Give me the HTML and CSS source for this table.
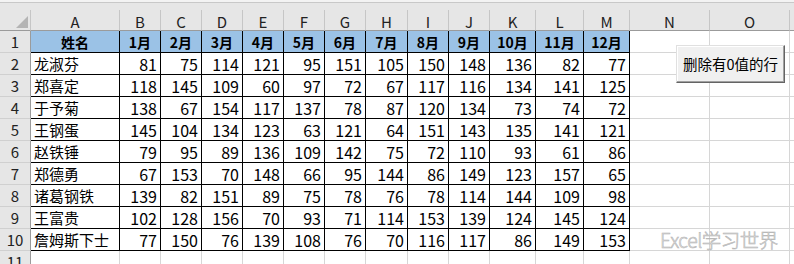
FILE: index.html
```html
<!DOCTYPE html>
<html lang="zh">
<head>
<meta charset="utf-8">
<link rel="stylesheet" href="styles.css">
</head>
<body>
<div class="top"></div>
<div class="sheet">
  <div class="ch corner"><span class="tri"></span></div>
  <div class="ch">A</div><div class="ch">B</div><div class="ch">C</div><div class="ch">D</div><div class="ch">E</div><div class="ch">F</div><div class="ch">G</div><div class="ch">H</div><div class="ch">I</div><div class="ch">J</div><div class="ch">K</div><div class="ch">L</div><div class="ch">M</div><div class="ch">N</div><div class="ch">O</div><div class="ch e"></div>

  <div class="rh">1</div>
  <div class="c hd">姓名</div><div class="c hd">1月</div><div class="c hd">2月</div><div class="c hd">3月</div><div class="c hd">4月</div><div class="c hd">5月</div><div class="c hd">6月</div><div class="c hd">7月</div><div class="c hd">8月</div><div class="c hd">9月</div><div class="c hd">10月</div><div class="c hd">11月</div><div class="c hd">12月</div><div></div><div></div><div class="e"></div>

  <div class="rh">2</div>
  <div class="c nm">龙淑芬</div><div class="c num">81</div><div class="c num">75</div><div class="c num">114</div><div class="c num">121</div><div class="c num">95</div><div class="c num">151</div><div class="c num">105</div><div class="c num">150</div><div class="c num">148</div><div class="c num">136</div><div class="c num">82</div><div class="c num">77</div><div></div><div></div><div class="e"></div>

  <div class="rh">3</div>
  <div class="c nm">郑喜定</div><div class="c num">118</div><div class="c num">145</div><div class="c num">109</div><div class="c num">60</div><div class="c num">97</div><div class="c num">72</div><div class="c num">67</div><div class="c num">117</div><div class="c num">116</div><div class="c num">134</div><div class="c num">141</div><div class="c num">125</div><div></div><div></div><div class="e"></div>

  <div class="rh">4</div>
  <div class="c nm">于予菊</div><div class="c num">138</div><div class="c num">67</div><div class="c num">154</div><div class="c num">117</div><div class="c num">137</div><div class="c num">78</div><div class="c num">87</div><div class="c num">120</div><div class="c num">134</div><div class="c num">73</div><div class="c num">74</div><div class="c num">72</div><div></div><div></div><div class="e"></div>

  <div class="rh">5</div>
  <div class="c nm">王钢蛋</div><div class="c num">145</div><div class="c num">104</div><div class="c num">134</div><div class="c num">123</div><div class="c num">63</div><div class="c num">121</div><div class="c num">64</div><div class="c num">151</div><div class="c num">143</div><div class="c num">135</div><div class="c num">141</div><div class="c num">121</div><div></div><div></div><div class="e"></div>

  <div class="rh">6</div>
  <div class="c nm">赵铁锤</div><div class="c num">79</div><div class="c num">95</div><div class="c num">89</div><div class="c num">136</div><div class="c num">109</div><div class="c num">142</div><div class="c num">75</div><div class="c num">72</div><div class="c num">110</div><div class="c num">93</div><div class="c num">61</div><div class="c num">86</div><div></div><div></div><div class="e"></div>

  <div class="rh">7</div>
  <div class="c nm">郑德勇</div><div class="c num">67</div><div class="c num">153</div><div class="c num">70</div><div class="c num">148</div><div class="c num">66</div><div class="c num">95</div><div class="c num">144</div><div class="c num">86</div><div class="c num">149</div><div class="c num">123</div><div class="c num">157</div><div class="c num">65</div><div></div><div></div><div class="e"></div>

  <div class="rh">8</div>
  <div class="c nm">诸葛钢铁</div><div class="c num">139</div><div class="c num">82</div><div class="c num">151</div><div class="c num">89</div><div class="c num">75</div><div class="c num">78</div><div class="c num">76</div><div class="c num">78</div><div class="c num">114</div><div class="c num">144</div><div class="c num">109</div><div class="c num">98</div><div></div><div></div><div class="e"></div>

  <div class="rh">9</div>
  <div class="c nm">王富贵</div><div class="c num">102</div><div class="c num">128</div><div class="c num">156</div><div class="c num">70</div><div class="c num">93</div><div class="c num">71</div><div class="c num">114</div><div class="c num">153</div><div class="c num">139</div><div class="c num">124</div><div class="c num">145</div><div class="c num">124</div><div></div><div></div><div class="e"></div>

  <div class="rh">10</div>
  <div class="c nm">詹姆斯下士</div><div class="c num">77</div><div class="c num">150</div><div class="c num">76</div><div class="c num">139</div><div class="c num">108</div><div class="c num">76</div><div class="c num">70</div><div class="c num">116</div><div class="c num">117</div><div class="c num">86</div><div class="c num">149</div><div class="c num">153</div><div></div><div></div><div class="e"></div>

  <div class="rh">11</div>
  <div></div><div></div><div></div><div></div><div></div><div></div><div></div><div></div><div></div><div></div><div></div><div></div><div></div><div></div><div></div><div class="e"></div>
</div>
<button class="btn" type="button">删除有0值的行</button>
<div class="mark">Excel学习世界</div>
</body>
</html>
```

FILE: styles.css
```css
html, body {
  margin: 0;
  padding: 0;
}
body {
  width: 794px;
  height: 264px;
  overflow: hidden;
  background: #fff;
  position: relative;
  font-family: "Noto Sans CJK SC", "Noto Sans", sans-serif;
  color: #000;
}
.top {
  height: 10px;
  background: linear-gradient(#f3f3f3 0 2px, #c8c8c8 2px 3px, #e6e6e6 3px);
}
.sheet {
  display: grid;
  grid-template-columns: 31px 89px 41px 41px 41px 41px 41px 41px 42px 41px 41px 46px 48px 46px 80px 80px 1fr;
  grid-template-rows: 21px repeat(11, 22px);
}
.sheet > div {
  box-sizing: border-box;
  border-right: 1px solid #d6d6d6;
  border-bottom: 1px solid #d6d6d6;
  display: flex;
  align-items: center;
  font-size: 15px;
  line-height: 1;
  white-space: nowrap;
  overflow: hidden;
}
.sheet > .e {
  border-right: none;
}
.sheet > .ch {
  background: #e6e6e6;
  border-right-color: #c6c6c6;
  border-bottom-color: #9b9b9b;
  justify-content: center;
  font-size: 15px;
  color: #222;
  padding-top: 2px;
}
.sheet > .corner {
  justify-content: flex-end;
  align-items: flex-end;
  padding: 0 2px 2px 0;
}
.tri {
  width: 12px;
  height: 12px;
  background: #b4b4b4;
  clip-path: polygon(100% 0, 100% 100%, 0 100%);
}
.sheet > .rh {
  background: #e6e6e6;
  border-right-color: #9b9b9b;
  border-bottom-color: #d0d0d0;
  justify-content: center;
  font-size: 15px;
  color: #222;
}
.sheet > .c {
  border-right-color: #000;
  border-bottom-color: #000;
}
.sheet > .hd {
  background: #9bc2e6;
  font-weight: bold;
  font-size: 14px;
  justify-content: center;
}
.sheet > .num {
  justify-content: flex-end;
  padding-right: 3px;
  font-size: 16px;
}
.sheet > .nm {
  padding-left: 3px;
}
.btn {
  position: absolute;
  left: 676px;
  top: 45px;
  width: 109px;
  height: 38px;
  box-sizing: border-box;
  margin: 0;
  padding: 0;
  background: #f0f0f0;
  border-top: 1px solid #e0e0e0;
  border-left: 1px solid #e0e0e0;
  border-right: 1px solid #646464;
  border-bottom: 1px solid #646464;
  box-shadow: inset -1px -1px 0 #a0a0a0, inset 1px 1px 0 #fff;
  font-family: "Noto Sans CJK SC", sans-serif;
  font-size: 14.5px;
  color: #000;
  line-height: 1;
}
.mark {
  position: absolute;
  left: 660px;
  top: 230px;
  font-family: "Noto Sans CJK SC", sans-serif;
  font-size: 19.5px;
  font-weight: 300;
  line-height: 1;
  color: #e4e4e4;
  -webkit-text-stroke: 0.5px #b0b0b0;
  letter-spacing: -0.5px;
}
```
